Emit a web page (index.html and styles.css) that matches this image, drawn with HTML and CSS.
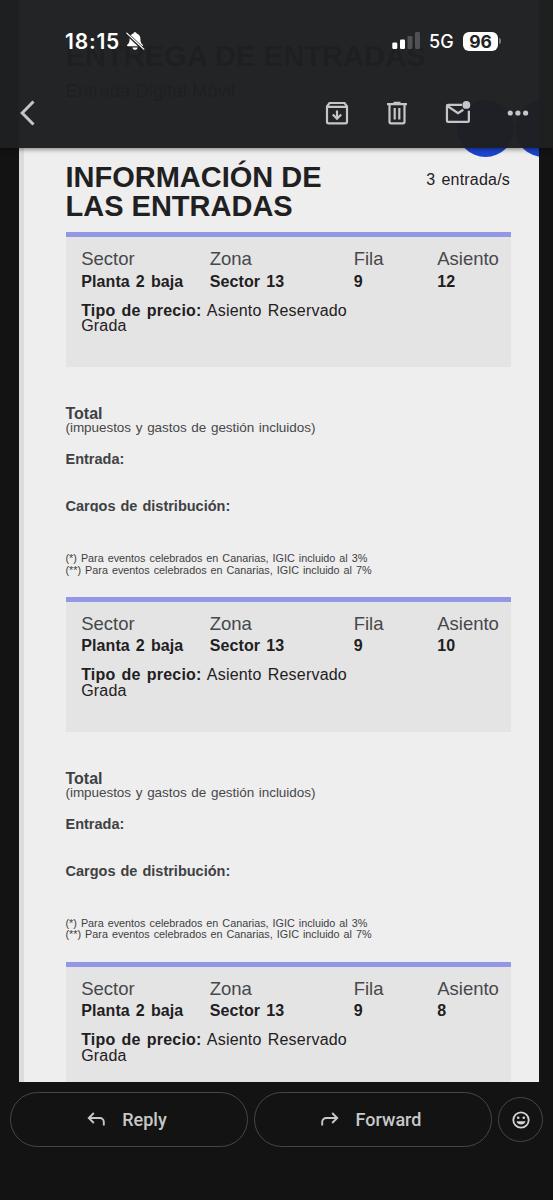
FILE: index.html
```html
<!DOCTYPE html>
<html lang="es">
<head>
  <meta charset="UTF-8">
  <meta name="viewport" content="width=device-width, initial-scale=1.0">
  <title>Información de las entradas</title>
  <link rel="stylesheet" href="styles.css">
</head>
<body>
  <header class="topbar">
    <div class="status">
      <span class="time">18:15</span>
      <svg class="bell" width="20" height="20" viewBox="0 0 20 20">
        <path fill="#fff" d="M10 1.200c-.9 0-1.500.5-1.600 1.300C5.900 3.200 4.600 5.200 4.600 8c0 3.400-.8 4.400-2.100 5.600-.8.800-.5 1.700.5 1.700h14c1 0 1.300-.9.500-1.700C16.200 12.400 15.400 11.400 15.400 8c0-2.800-1.300-4.800-3.800-5.500C11.500 1.700 10.900 1.200 10 1.200zM7.400 16.500h5.200c-.3 1.500-1.300 2.300-2.600 2.300s-2.300-.8-2.600-2.300z"/>
        <path stroke="#222325" stroke-width="3.200" d="M1.500 2.300l17 16"/>
        <path stroke="#fff" stroke-width="1.300" stroke-linecap="round" d="M1.800 2.100l17 16"/>
      </svg>
      <svg class="signal" width="29" height="18" viewBox="0 0 29 18">
        <rect x="0.300" y="10.500" width="5" height="6.500" rx="1.300" fill="#fff"/>
        <rect x="8" y="7.500" width="5" height="9.500" rx="1.300" fill="#fff"/>
        <rect x="15.500" y="4" width="5" height="13" rx="1.300" fill="#505153"/>
        <rect x="23" y="0" width="5" height="17" rx="1.300" fill="#505153"/>
      </svg>
      <span class="network">5G</span>
      <span class="battery">96</span>
      <span class="battery-tip"></span>
    </div>
    <nav class="actions">
      <svg class="back" width="18" height="28" viewBox="0 0 18 28"><path d="M15.500 2.500L4.200 14 15.500 25.500" fill="none" stroke="#c4c7c9" stroke-width="3"/></svg>
      <svg width="24" height="24" viewBox="0 0 24 24" fill="none" stroke="#c4c7c9" stroke-width="2.200">
        <path d="M2 5.400L4.500 2h15L22 5.400V20.800a1.500 1.500 0 0 1-1.500 1.500h-17A1.500 1.500 0 0 1 2 20.800zM2 5.800h20"/>
        <path d="M12 9.500v8M7.800 13.500l4.200 4.200 4.200-4.200"/>
      </svg>
      <svg width="24" height="24" viewBox="0 0 24 24" fill="none" stroke="#c4c7c9" stroke-width="2.200">
        <path d="M2 3.200h20M8.500 1.800h7M4.500 3.200v17.600a1.500 1.500 0 0 0 1.500 1.500h12a1.500 1.500 0 0 0 1.500-1.500V3.200M9.700 7v11.500M14.300 7v11.500"/>
      </svg>
      <svg class="unread" width="26" height="26" viewBox="0 0 28 26" fill="none" stroke="#c4c7c9" stroke-width="2.400">
        <path d="M18.300 4.200H3.300a1.200 1.200 0 0 0-1.200 1.200v16a1.200 1.200 0 0 0 1.200 1.200h21.200a1.200 1.200 0 0 0 1.200-1.200V10.500M2.600 5.500L14 13.300l5.700-3.800"/>
        <circle cx="23" cy="4.300" r="4.200" fill="#c4c7c9" stroke="none"/>
      </svg>
      <svg width="22" height="8" viewBox="0 0 22 8" fill="#c4c7c9"><circle cx="3.200" cy="4" r="2.600"/><circle cx="10.900" cy="4" r="2.600"/><circle cx="18.600" cy="4" r="2.600"/></svg>
    </nav>
  </header>

  <main class="sheet">
    <h2 class="delivery">ENTREGA DE ENTRADAS</h2>
    <p class="delivery-type">Entrada Digital Móvil</p>
    <span class="dot dot-1"></span>
    <span class="dot dot-2"></span>

    <div class="heading">
      <h1>INFORMACIÓN DE<br>LAS ENTRADAS</h1>
      <span class="count">3 entrada/s</span>
    </div>

    <section class="ticket">
      <div class="seat">
        <div class="grid">
          <span class="label">Sector</span><span class="label">Zona</span><span class="label">Fila</span><span class="label">Asiento</span>
          <b>Planta 2 baja</b><b>Sector 13</b><b>9</b><b>12</b>
        </div>
        <p class="price"><b>Tipo de precio:</b> Asiento Reservado<br>Grada</p>
      </div>
      <p class="total">Total</p>
      <p class="taxes">(impuestos y gastos de gestión incluidos)</p>
      <p class="line">Entrada:</p>
      <p class="line charges cut">Cargos de distribución:</p>
      <p class="notes">(*) Para eventos celebrados en Canarias, IGIC incluido al 3%<br>(**) Para eventos celebrados en Canarias, IGIC incluido al 7%</p>
    </section>

    <section class="ticket">
      <div class="seat">
        <div class="grid">
          <span class="label">Sector</span><span class="label">Zona</span><span class="label">Fila</span><span class="label">Asiento</span>
          <b>Planta 2 baja</b><b>Sector 13</b><b>9</b><b>10</b>
        </div>
        <p class="price"><b>Tipo de precio:</b> Asiento Reservado<br>Grada</p>
      </div>
      <p class="total">Total</p>
      <p class="taxes">(impuestos y gastos de gestión incluidos)</p>
      <p class="line">Entrada:</p>
      <p class="line charges">Cargos de distribución:</p>
      <p class="notes">(*) Para eventos celebrados en Canarias, IGIC incluido al 3%<br>(**) Para eventos celebrados en Canarias, IGIC incluido al 7%</p>
    </section>

    <section class="ticket">
      <div class="seat">
        <div class="grid">
          <span class="label">Sector</span><span class="label">Zona</span><span class="label">Fila</span><span class="label">Asiento</span>
          <b>Planta 2 baja</b><b>Sector 13</b><b>9</b><b>8</b>
        </div>
        <p class="price"><b>Tipo de precio:</b> Asiento Reservado<br>Grada</p>
      </div>
    </section>
  </main>

  <footer class="bottom">
    <button class="pill">
      <svg width="18" height="16" viewBox="0 0 18 16" fill="none" stroke="#c8c8c8" stroke-width="1.900"><path d="M6.800 1L1.800 6l5 5M1.800 6h11a4 4 0 0 1 4 4v3.500"/></svg>
      Reply
    </button>
    <button class="pill">
      <svg width="18" height="16" viewBox="0 0 18 16" fill="none" stroke="#c8c8c8" stroke-width="1.900"><path d="M11.200 1l5 5-5 5M16.200 6h-11a4 4 0 0 0-4 4v3.500"/></svg>
      Forward
    </button>
    <button class="emoji">
      <svg width="18" height="18" viewBox="0 0 18 18"><circle cx="9" cy="9" r="7.700" fill="none" stroke="#d4d4d4" stroke-width="1.800"/><circle cx="6.200" cy="6.700" r="1.300" fill="#d4d4d4"/><circle cx="11.800" cy="6.700" r="1.300" fill="#d4d4d4"/><path d="M4.500 10.200h9c-.6 2.300-2.300 3.200-4.500 3.200s-3.900-.9-4.500-3.200z" fill="#d4d4d4"/></svg>
    </button>
  </footer>
</body>
</html>
```
FILE: styles.css
```css
* {
  box-sizing: border-box;
}

body {
  margin: 0;
  height: 1200px;
  overflow: hidden;
  background: #131313;
  font-family: "Liberation Sans", Arial, sans-serif;
}

h1, h2, p {
  margin: 0;
}

svg {
  display: block;
  flex: none;
}

/* Top bar, floats over the scrolled mail */
.topbar {
  position: absolute;
  z-index: 2;
  top: 0;
  left: 0;
  width: 553px;
  height: 148px;
  padding: 29px 0 0;
  background: rgba(31, 32, 34, 0.98);
  box-shadow: 0 1px 5px rgba(0, 0, 0, 0.5);
}

.status {
  display: flex;
  align-items: center;
  height: 24px;
  padding-left: 65px;
  color: #fff;
  font-family: Inter, sans-serif;
}

.time {
  width: 60px;
  font-size: 21px;
  font-weight: 600;
  letter-spacing: 0.8px;
}

.signal {
  margin-left: 247px;
}

.network {
  width: 34px;
  margin-left: 8px;
  font-size: 18px;
  font-weight: 500;
}

.battery {
  width: 35px;
  height: 19px;
  border-radius: 6px;
  background: #fff;
  color: #222325;
  font-size: 17.500px;
  font-weight: 700;
  line-height: 19px;
  text-align: center;
}

.battery-tip {
  width: 2px;
  height: 6px;
  margin-left: 1px;
  border-radius: 0 2px 2px 0;
  background: #77787a;
}

.actions {
  display: flex;
  align-items: center;
  height: 28px;
  margin-top: 46px;
  padding-left: 18px;
}

.actions .back {
  margin-right: 289px;
}

.actions svg + svg {
  margin-right: 36px;
}

/* Mail */
.sheet {
  position: relative;
  width: 520px;
  height: 1082px;
  margin-left: 19px;
  padding: 41.5px 28px 0 41.5px;
  overflow: hidden;
  border-left: 5px solid #dcdcdc;
  background: #eee;
  color: #1f2022;
}

.delivery,
.heading h1 {
  font-size: 29px;
  line-height: 29px;
}

.delivery {
  letter-spacing: 0.1px;
}

.delivery-type {
  margin-top: 9px;
  font-size: 18.5px;
  line-height: 22px;
}

.dot {
  position: absolute;
  top: 100px;
  width: 57px;
  height: 57px;
  border-radius: 50%;
  background: #1c45cf;
}

.dot-1 {
  left: 432.5px;
}

.dot-2 {
  left: 491px;
}

.heading {
  display: flex;
  justify-content: space-between;
  margin: 61.500px 1px 11.200px 0;
}

.count {
  margin-top: 8px;
  font-size: 16px;
  line-height: 18px;
  letter-spacing: 0.2px;
  word-spacing: 1.500px;
}

/* Tickets */
.ticket {
  height: 364.7px;
}

.seat {
  height: 134.7px;
  padding: 12.300px 0 0 15.700px;
  border-top: 5px solid #9298e6;
  background: #e4e4e4;
}

.grid {
  display: grid;
  grid-template-columns: 128.500px 144px 83.500px auto;
  row-gap: 2.200px;
  font-size: 16px;
  line-height: 20px;
  letter-spacing: 0.1px;
  word-spacing: 1.500px;
}

.label {
  color: #47484a;
  font-size: 18.500px;
  letter-spacing: 0;
}

.price {
  margin-top: 11px;
  font-size: 16px;
  line-height: 15.600px;
  letter-spacing: 0.2px;
  word-spacing: 1.500px;
}

.total {
  margin-top: 39px;
  color: #404143;
  font-size: 16px;
  font-weight: bold;
  line-height: 15px;
}

.taxes {
  color: #47484a;
  font-size: 13.500px;
  line-height: 14px;
  letter-spacing: -0.050px;
  word-spacing: 1px;
}

.line {
  margin-top: 16.500px;
  color: #404143;
  font-size: 14.500px;
  font-weight: bold;
  line-height: 16px;
  word-spacing: 1px;
}

.charges {
  margin-top: 30.500px;
}

.cut {
  clip-path: inset(0 0 2px 0);
}

.notes {
  margin-top: 39px;
  color: #404143;
  font-size: 10.800px;
  line-height: 11.800px;
  word-spacing: 1px;
}

/* Reply bar */
.bottom {
  display: flex;
  align-items: center;
  gap: 6px;
  padding: 10px 10px 0;
}

.pill,
.emoji {
  display: flex;
  align-items: center;
  justify-content: center;
  padding: 0;
  border: 1px solid #464646;
  background: none;
}

.pill {
  gap: 17px;
  width: 238px;
  height: 55px;
  padding-right: 4px;
  border-radius: 28px;
  color: #c8c8c8;
  font: 500 18px Roboto, sans-serif;
}

.emoji {
  width: 45px;
  height: 45px;
  border-radius: 50%;
}
```
